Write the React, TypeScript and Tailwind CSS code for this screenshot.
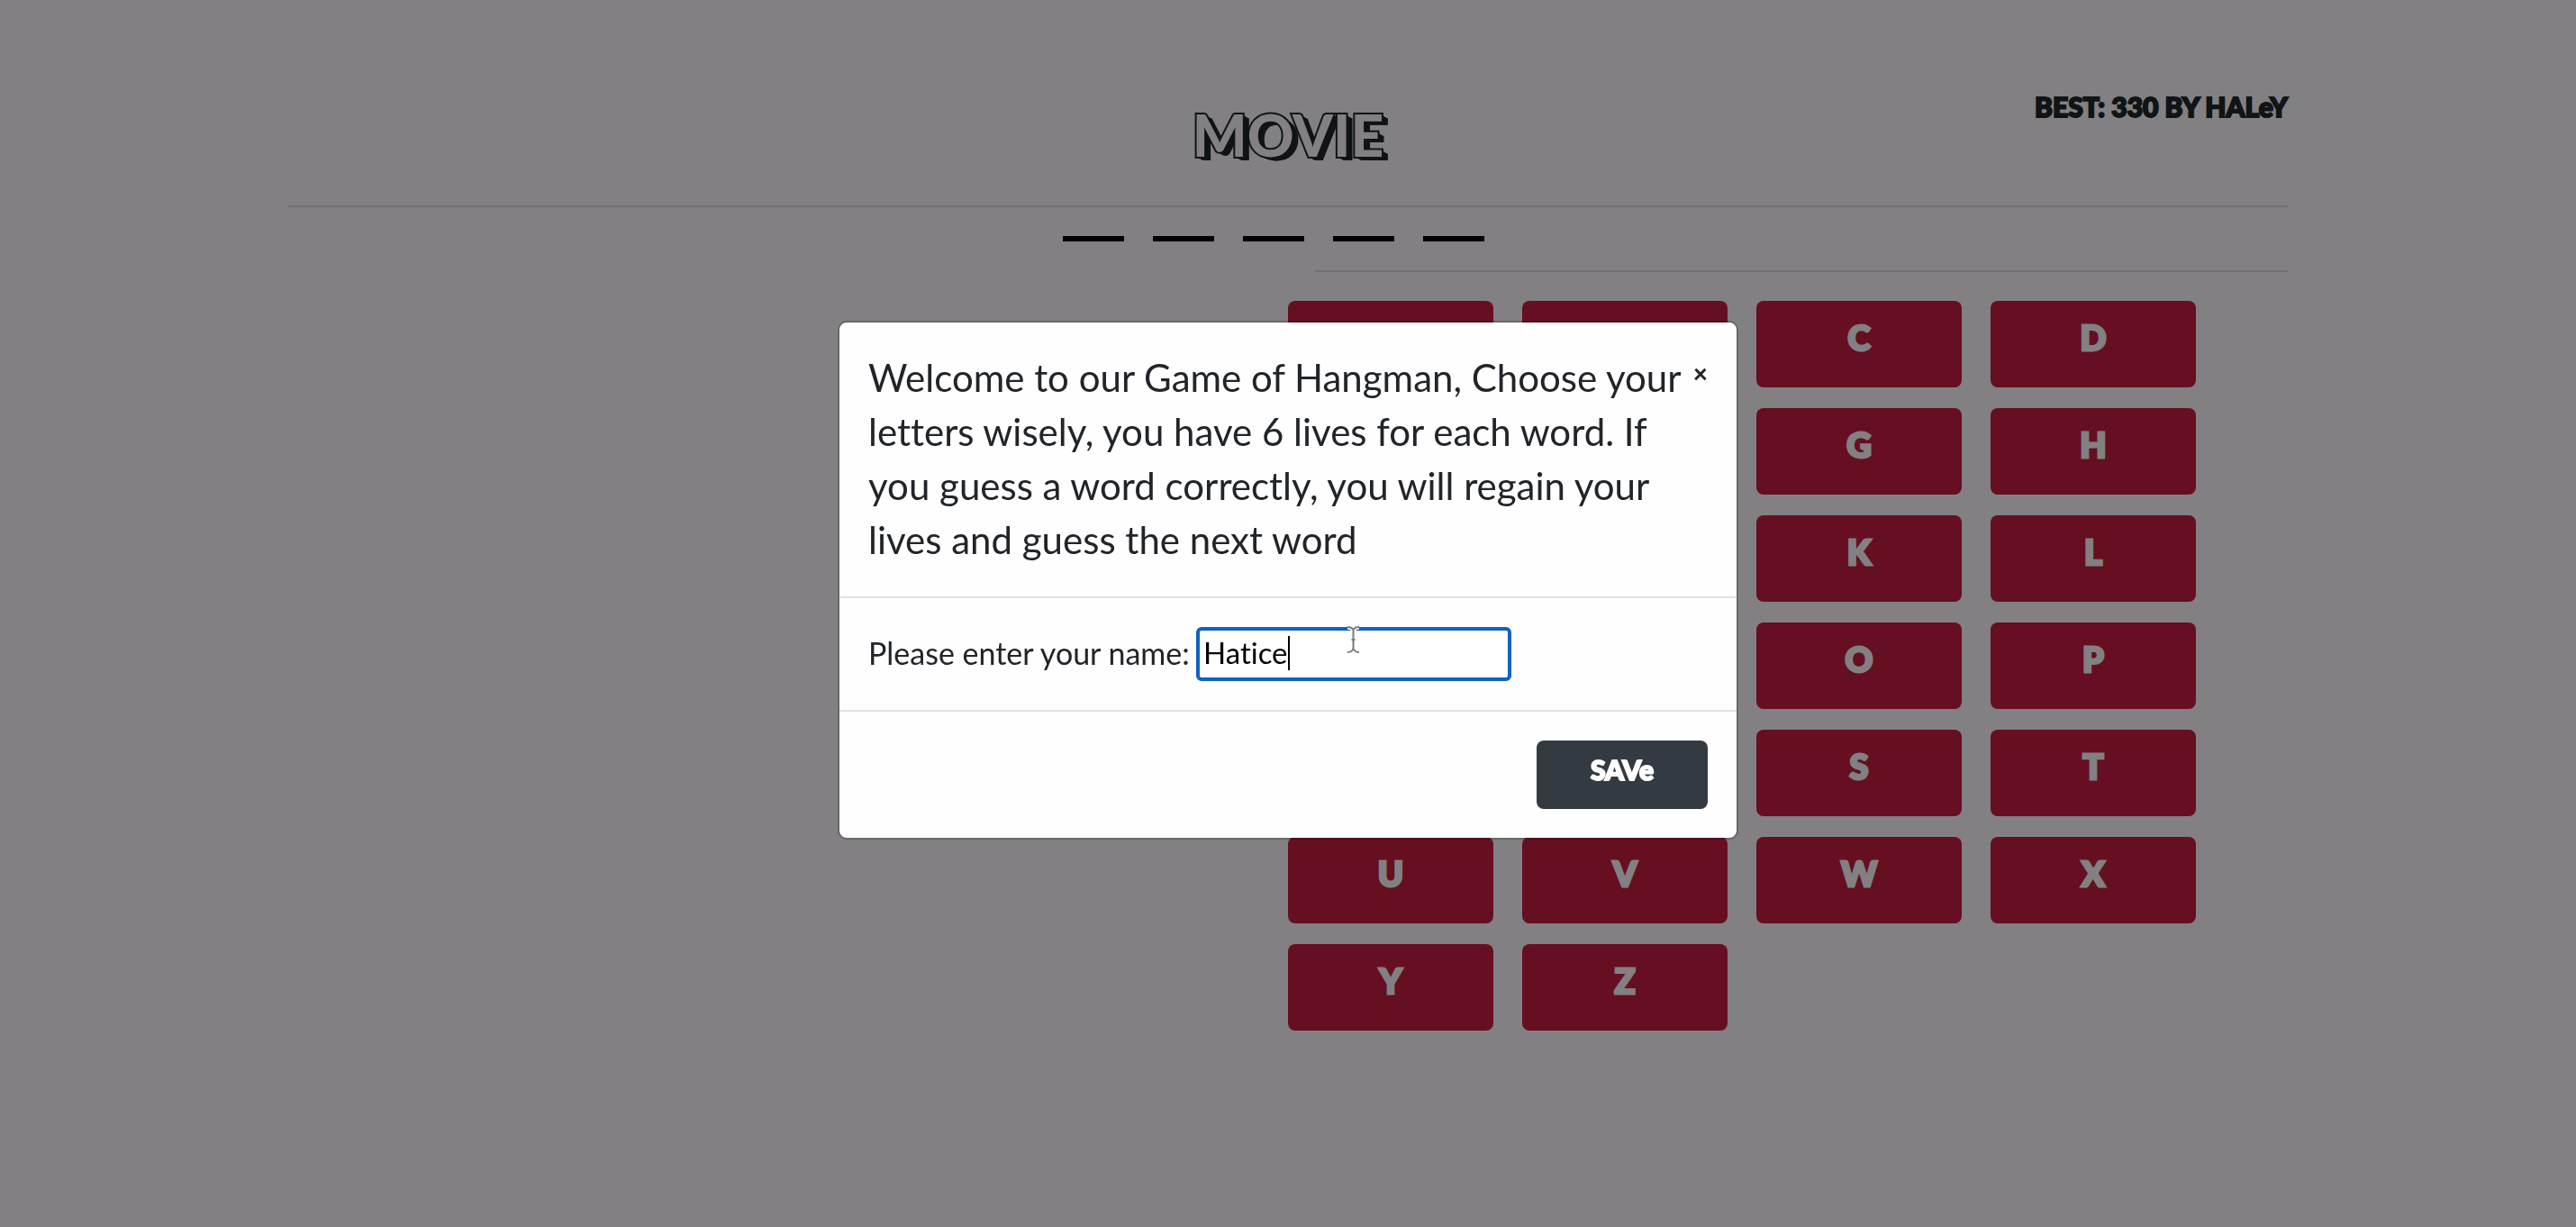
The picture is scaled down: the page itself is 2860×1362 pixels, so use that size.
import React, { useState } from "react";

const LETTERS = "ABCDEFGHIJKLMNOPQRSTUVWXYZ".split("");
const WORD_LENGTH = 5;

const INTRO_LINES = [
  "Welcome to our Game of Hangman, Choose your",
  "letters wisely, you have 6 lives for each word. If",
  "you guess a word correctly, you will regain your",
  "lives and guess the next word",
];

function Header() {
  return (
    <header className="relative border-b-2 border-[#737173] pt-[102px]">
      <h1 className="h-[126px] text-center font-['Lato',sans-serif] text-[64px] leading-[96px] font-black text-[#828082] [-webkit-text-stroke:4px_#111417] [paint-order:stroke_fill] [text-shadow:1px_1px_#111417,2px_1px_#111417,3px_2px_#111417,4px_3px_#111417,5px_3px_#111417,6px_4px_#111417,7px_4px_#111417]">
        MOVIE
      </h1>
      <p className="absolute top-[94px] right-0 font-['Lato',sans-serif] text-[30px] leading-[48px] font-black text-[#111417] [-webkit-text-stroke:2px_#111417]">
        BEST: 330 BY HALeY
      </p>
    </header>
  );
}

function Blanks() {
  return (
    <div className="flex h-[70px] justify-center pt-8">
      {Array.from({ length: WORD_LENGTH }, (_, i) => (
        <span key={i} className="mr-8 h-1.5 w-[68px] bg-black" />
      ))}
    </div>
  );
}

function Keyboard() {
  return (
    <section className="ml-auto w-1/2">
      <hr className="ml-[30px] border-t-2 border-[#737173]" />
      <div className="mt-8 grid w-fit grid-cols-4 gap-x-8 gap-y-[23px]">
        {LETTERS.map((letter) => (
          <button
            key={letter}
            type="button"
            className="h-24 w-[228px] rounded-lg bg-[#650f21] pb-4 text-center font-['Lato',sans-serif] text-[38px] leading-[60px] font-black text-[#828082] [-webkit-text-stroke:3px_#828082]"
          >
            {letter}
          </button>
        ))}
      </div>
    </section>
  );
}

function TextCursor() {
  const d =
    "M2 2 C5 2 7.5 3 8.5 5.5 C9.5 3 12 2 15 2 M8.5 5.5 V26 M2 30 C5 30 7.5 28.5 8.5 26 C9.5 28.5 12 30 15 30 M6.5 16 H10.5";
  return (
    <svg
      className="pointer-events-none absolute -top-0.5 left-[166px] h-8 w-[17px]"
      viewBox="0 0 17 32"
      fill="none"
      aria-hidden="true"
    >
      <path d={d} stroke="#ffffff" strokeWidth="5" />
      <path d={d} stroke="#7b7b7b" strokeWidth="2" />
    </svg>
  );
}

function WelcomeDialog() {
  const [name, setName] = useState("Hatice");
  return (
    <div className="fixed inset-0 flex items-start justify-center pt-[356px]">
      <div
        role="dialog"
        aria-modal="true"
        aria-labelledby="intro"
        className="w-[1000px] rounded-[10px] border-2 border-black/20 bg-[#fefefe] bg-clip-padding font-['Lato',sans-serif] text-[#212529] [font-variant-ligatures:none]"
      >
        <div className="flex items-start justify-between border-b-2 border-[#dee2e6] px-8 pt-[31px] pb-[33px]">
          <h2 id="intro" className="text-[42px] leading-[60px] whitespace-nowrap">
            {INTRO_LINES.map((line) => (
              <span key={line} className="block">
                {line}
              </span>
            ))}
          </h2>
          <button type="button" aria-label="Close" className="text-[28px] leading-[50px] font-black">
            ×
          </button>
        </div>
        <div className="flex items-start px-8 py-8">
          <label htmlFor="player" className="text-[34px] leading-[58px]">
            Please enter your name:
          </label>
          <div className="relative mr-[218px] ml-auto">
            <input
              id="player"
              type="text"
              value={name}
              onChange={(e) => setName(e.target.value)}
              className="block h-[60px] w-[350px] rounded-md border-4 border-[#1062c4] bg-white px-1 pb-1 text-[33px] leading-[48px] text-black caret-transparent outline-none"
            />
            <span className="absolute top-2.5 left-[102px] h-[38px] w-0.5 bg-black" />
            <TextCursor />
          </div>
        </div>
        <div className="flex justify-end border-t-2 border-[#dee2e6] p-8">
          <button
            type="button"
            className="h-[76px] w-[190px] rounded-lg bg-[#343a42] pb-3 font-['Lato',sans-serif] text-[30px] leading-[48px] font-black text-white [-webkit-text-stroke:2px_#ffffff]"
          >
            SAVe
          </button>
        </div>
      </div>
    </div>
  );
}

export default function App() {
  return (
    <div className="min-h-screen bg-[#828082]">
      <main className="mx-auto max-w-[2220px]">
        <Header />
        <Blanks />
        <Keyboard />
      </main>
      <WelcomeDialog />
    </div>
  );
}
